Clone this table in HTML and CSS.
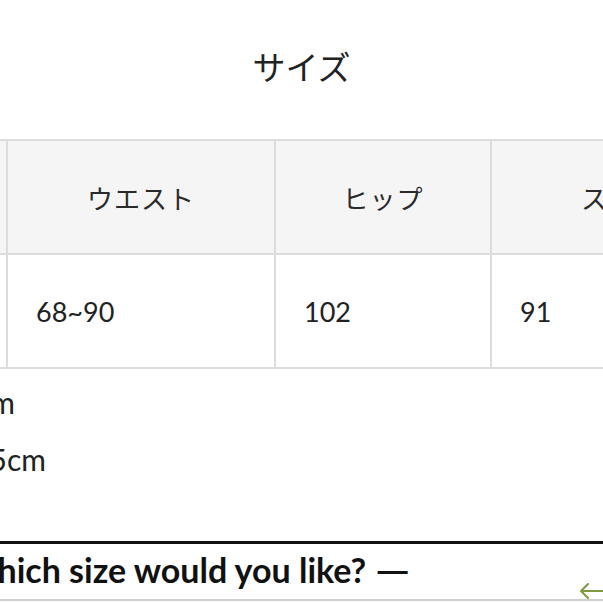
FILE: index.html
```html
<!DOCTYPE html>
<html lang="ja">
<head>
<meta charset="utf-8">
<link rel="stylesheet" href="styles.css">
</head>
<body>
<div class="screen">
  <h1 class="title">サイズ</h1>
  <table class="size-table">
    <thead>
      <tr>
        <th class="col-a">着丈</th>
        <th class="col-b">ウエスト</th>
        <th class="col-c">ヒップ</th>
        <th class="col-d">スソ</th>
      </tr>
    </thead>
    <tbody>
      <tr>
        <td>F</td>
        <td>68~90</td>
        <td>102</td>
        <td>91</td>
      </tr>
    </tbody>
  </table>
  <div class="notes">
    <p class="note note-1">モデル身長 165cm</p>
    <p class="note note-2">着用サイズ 約35cm</p>
  </div>
  <div class="question">
    <p class="question-text">Which size would you like? <span class="dash">—</span></p>
    <svg class="arrow" width="30" height="20" viewBox="0 0 30 20" aria-hidden="true">
      <path d="M3 10 H30 M10 3 L3 10 L10 17" fill="none" stroke="#7f9a3e" stroke-width="2" stroke-linecap="round" stroke-linejoin="round"/>
    </svg>
  </div>
</div>
</body>
</html>
```

FILE: styles.css
```css
html, body {
  margin: 0;
  padding: 0;
  background: #ffffff;
}

body {
  width: 603px;
  height: 603px;
  overflow: hidden;
  font-family: Lato, "Noto Sans CJK JP", sans-serif;
  color: #222222;
}

.screen {
  width: 603px;
  height: 603px;
  overflow: hidden;
  display: flex;
  flex-direction: column;
}

.title {
  margin: 43px 0 0 0;
  height: 96px;
  font-family: "Noto Sans CJK JP", sans-serif;
  font-weight: 400;
  font-size: 33px;
  line-height: 46px;
  text-align: center;
  color: #222222;
}

.size-table {
  margin-left: -196px;
  border-collapse: collapse;
  table-layout: fixed;
  width: 912px;
  flex: none;
}

.size-table th,
.size-table td {
  border: 2px solid #dcdcdc;
  height: 112px;
  padding: 0;
}

.size-table th {
  background: #f5f5f5;
  font-family: "Noto Sans CJK JP", sans-serif;
  font-weight: 400;
  font-size: 26px;
  text-align: center;
  color: #2a2a2a;
  letter-spacing: 1px;
}

.size-table td {
  background: #ffffff;
  font-family: Lato, sans-serif;
  font-size: 27px;
  text-align: left;
  padding-left: 28px;
  color: #222222;
}

.col-a { width: 200px; }
.col-b { width: 266px; }
.col-c { width: 214px; }
.col-d { width: 232px; }

.notes {
  display: flex;
  flex-direction: column;
  align-items: flex-end;
  width: 46px;
  margin-top: 5px;
}

.note {
  margin: 0;
  white-space: nowrap;
  font-family: Lato, "Noto Sans CJK JP", sans-serif;
  font-size: 30px;
  line-height: 57px;
  color: #222222;
}

.note-1 { padding-right: 31px; }
.note-2 { padding-right: 0; }

.question {
  margin-top: 53px;
  border-top: 3px solid #111111;
  border-bottom: 2px solid #cfcfcf;
  display: flex;
  align-items: flex-start;
  justify-content: space-between;
  height: 60px;
  box-sizing: border-box;
  flex: none;
}

.question-text {
  margin: 0 0 0 -38px;
  white-space: nowrap;
  font-family: Lato, sans-serif;
  font-weight: 700;
  font-size: 34px;
  line-height: 52px;
  color: #111111;
}

.dash {
  display: inline-block;
  transform: scaleX(1.3);
  transform-origin: left center;
}

.arrow {
  margin-top: 37px;
  margin-right: -5px;
  flex: none;
}
```
